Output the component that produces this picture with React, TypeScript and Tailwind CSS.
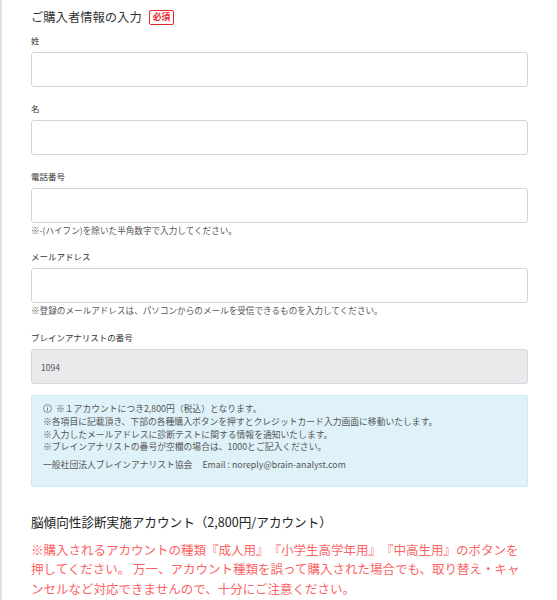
const font = { fontFamily: '"Noto Sans CJK JP", "Noto Sans", sans-serif' }

function Field({
  label,
  help,
  value,
  disabled,
  className,
}: {
  label: string
  help?: string
  value?: string
  disabled?: boolean
  className?: string
}) {
  return (
    <div className={className}>
      <label className="block text-[8.5px] leading-[13px] text-[#333] mb-[5px]">{label}</label>
      <input
        type="text"
        defaultValue={value}
        disabled={disabled}
        className={`block w-full h-[35px] rounded-[3px] border px-[9px] text-[8.5px] text-[#555] outline-none ${
          disabled ? "bg-[#e8eaec] border-[#d6d9dc]" : "bg-white border-[#d4d4d4]"
        }`}
      />
      {help && <p className="mt-[1px] text-[8.6px] leading-[12px] text-[#555]">{help}</p>}
    </div>
  )
}

function InfoIcon() {
  return (
    <svg width="9" height="9" viewBox="0 0 10 10" className="inline-block align-[-1px] mr-[4px]">
      <circle cx="5" cy="5" r="4.4" fill="none" stroke="#666" strokeWidth="0.8" />
      <rect x="4.55" y="4" width="0.9" height="3.6" fill="#666" />
      <rect x="4.55" y="2.4" width="0.9" height="0.9" fill="#666" />
    </svg>
  )
}

export default function App() {
  return (
    <div lang="ja" className="min-h-screen bg-white [text-spacing-trim:space-all]" style={font}>
      <div className="w-[557px] min-h-[600px] border-l-2 border-[#dfe2e5] pl-[29px] pr-[29px] pt-[8px]">
        {/* Purchaser info */}
        <div className="flex items-center gap-[6px] h-[18px]">
          <h2 className="text-[12.3px] leading-[18px] text-[#333]">ご購入者情報の入力</h2>
          <span className="ml-[1px] inline-flex items-center h-[15px] px-[3px] rounded-[2px] border border-[#e8262c] text-[#e8262c] text-[8.8px] font-bold leading-none">
            必須
          </span>
        </div>

        <Field label="姓" className="mt-[8px]" />
        <Field label="名" className="mt-[15px]" />
        <Field label="電話番号" className="mt-[15px]" help="※-(ハイフン)を除いた半角数字で入力してください。" />
        <Field
          label="メールアドレス"
          className="mt-[14px]"
          help="※登録のメールアドレスは、パソコンからのメールを受信できるものを入力してください。"
        />
        <Field label="ブレインアナリストの番号" className="mt-[15px]" value="1094" disabled />

        {/* Notice */}
        <div className="mt-[11px] rounded-[2px] border border-[#cdeaf3] bg-[#dff2f9] pl-[11px] pr-[10px] pt-[7px] pb-[14px] text-[8.8px] leading-[12.8px] text-[#555]">
          <p>
            <InfoIcon />※１アカウントにつき2,800円（税込）となります。
          </p>
          <p>※各項目に記載頂き、下部の各種購入ボタンを押すとクレジットカード入力画面に移動いたします。</p>
          <p>※入力したメールアドレスに診断テストに関する情報を通知いたします。</p>
          <p>※ブレインアナリストの番号が空欄の場合は、1000とご記入ください。</p>
          <p className="mt-[5px]">
            一般社団法人ブレインアナリスト協会<span className="ml-[10px]">Email : noreply@brain-analyst.com</span>
          </p>
        </div>

        {/* Account section */}
        <h2 className="mt-[26px] text-[12.6px] leading-[18px] text-[#222]">
          脳傾向性診断実施アカウント（2,800円/アカウント）
        </h2>
        <p className="mt-[9px] text-[12.5px] leading-[19.5px] text-[#fb6464]">
          ※購入されるアカウントの種類『成人用』『小学生高学年用』『中高生用』のボタンを押してください。 万一、アカウント種類を誤って購入された場合でも、取り替え・キャンセルなど対応できませんので、十分にご注意ください。
        </p>
      </div>
    </div>
  )
}
